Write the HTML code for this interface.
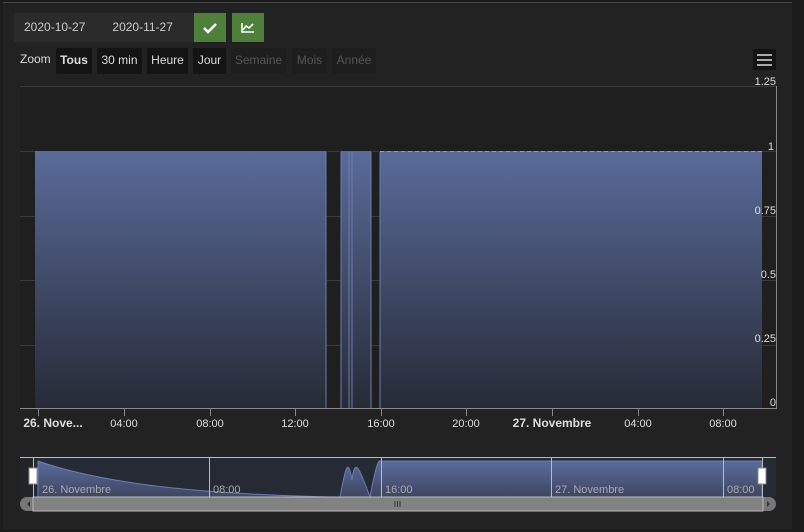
<!DOCTYPE html>
<html><head><style>
body{margin:0;width:804px;height:532px;background:#1c1c1c;overflow:hidden;font-family:"Liberation Sans",sans-serif;}
.panel{position:absolute;left:3px;top:2px;width:789px;height:526px;background:#222;border-top:1px solid #444;}
.date{position:absolute;top:13px;height:29px;background:#2b2b2b;color:#ccc;font-size:12px;line-height:29px;}
.btn{position:absolute;top:13px;width:32px;height:29px;background:#4e7f3b;}
.z{position:absolute;top:48px;height:26px;line-height:24px;font-size:12px;color:#ddd;background:#141414;border-radius:2px;text-align:center;}
.z.d{color:#555;background:#1e1e1e;}
svg{position:absolute;left:0;top:0}
</style></head><body>
<div class="panel"></div>
<div class="date" style="left:14px;width:180px;"><span style="padding-left:10px">2020-10-27</span><span style="padding-left:27px">2020-11-27</span></div>
<div class="btn" style="left:194px"><svg width="32" height="29"><path d="M10 15 l4 4 l8 -8" stroke="#fff" stroke-width="2.6" fill="none"/></svg></div>
<div class="btn" style="left:232px"><svg width="32" height="29"><path d="M10 10 v9 h12 M11 17 l3-4 3 2 4-4" stroke="#fff" stroke-width="1.6" fill="none"/></svg></div>
<div style="position:absolute;left:20px;top:52px;font-size:12px;color:#ddd">Zoom</div>
<div class="z" style="left:56px;width:36px;font-weight:bold">Tous</div>
<div class="z" style="left:97px;width:45px">30 min</div>
<div class="z" style="left:147px;width:41px">Heure</div>
<div class="z" style="left:193px;width:33px">Jour</div>
<div class="z d" style="left:231px;width:55px">Semaine</div>
<div class="z d" style="left:292px;width:35px">Mois</div>
<div class="z d" style="left:332px;width:44px">Année</div>
<svg width="804" height="532">
<defs><linearGradient id="g" x1="0" y1="0" x2="0" y2="1"><stop offset="0" stop-color="#5a6b9a"/><stop offset="1" stop-color="#272b37"/></linearGradient>
<linearGradient id="g2" x1="0" y1="0" x2="0" y2="1"><stop offset="0" stop-color="#5b6c9c"/><stop offset="1" stop-color="#3e4560"/></linearGradient></defs>
<rect x="753" y="49" width="23" height="21" rx="2" fill="#141414"/>
<path d="M757 55h15M757 60h15M757 65h15" stroke="#aaa" stroke-width="2"/>
<rect x="20" y="86" width="756" height="322" fill="#1f1f1f"/>
<g stroke="#3a3a3a"><path d="M20 86.5H776M20 151.5H776M20 216.5H776M20 280.5H776M20 345.5H776"/></g>
<rect x="35" y="151" width="291" height="257" fill="url(#g)"/>
<rect x="341" y="151" width="30" height="257" fill="url(#g)"/>
<rect x="380" y="151" width="382" height="257" fill="url(#g)"/>
<path d="M326 152V408M341 152V408M371 152V408M380 152V408M349 152V408M352 152V408" stroke="#6a7db0" stroke-width="1"/>
<path d="M380 151.5H762" stroke="#8a9ac0" stroke-dasharray="4 3"/>
<path d="M776.5 86V408M20 408.5H777" stroke="#888"/>
<g fill="#ddd" font-size="11" text-anchor="end"><text x="776" y="85">1.25</text><text x="774" y="150">1</text><text x="776" y="214">0.75</text><text x="776" y="278">0.5</text><text x="776" y="342">0.25</text><text x="776" y="406">0</text></g>
<g stroke="#888"><path d="M38.5 408v8M124.5 408v8M210.5 408v8M295.5 408v8M381.5 408v8M466.5 408v8M552.5 408v8M638.5 408v8M723.5 408v8"/></g>
<g fill="#ddd" font-size="11" text-anchor="middle"><text x="53" y="427" font-weight="bold" font-size="12">26. Nove...</text><text x="124" y="427">04:00</text><text x="210" y="427">08:00</text><text x="295" y="427">12:00</text><text x="381" y="427">16:00</text><text x="466" y="427">20:00</text><text x="552" y="427" font-weight="bold" font-size="12">27. Novembre</text><text x="638" y="427">04:00</text><text x="723" y="427">08:00</text></g>
<rect x="20" y="458" width="756" height="39" fill="#262a35"/>
<path d="M38 461 C120 490 250 495 330 497 L340 497 C345 470 348 455 352 480 C355 455 360 470 370 497 C375 470 378 460 380 461 H762 V497 H38Z" fill="url(#g2)" stroke="#6a7db0"/>
<rect x="20" y="458" width="14" height="39" fill="#222" opacity=".6"/>
<g stroke="#bbb"><path d="M20 457.5H776M209.5 458v39M381.5 458v39M551.5 458v39M723.5 458v39M33.5 458v40M762.5 458v40"/></g>
<rect x="29" y="468" width="8" height="16" fill="#fff" stroke="#888"/><rect x="758" y="468" width="8" height="16" fill="#fff" stroke="#888"/>
<g fill="#aaa" font-size="11"><text x="42" y="493">26. Novembre</text><text x="213" y="493">08:00</text><text x="385" y="493">16:00</text><text x="555" y="493">27. Novembre</text><text x="727" y="493">08:00</text></g>
<rect x="20" y="497" width="756" height="14" rx="7" fill="#777"/>
<rect x="33" y="497" width="730" height="14" fill="#828282" stroke="#bbb"/>
<path d="M395 501v6M397.5 501v6M400 501v6" stroke="#333"/>
<path d="M27 504l3-3v6z M770 504l-3-3v6z" fill="#333"/>
</svg>
</body></html>
